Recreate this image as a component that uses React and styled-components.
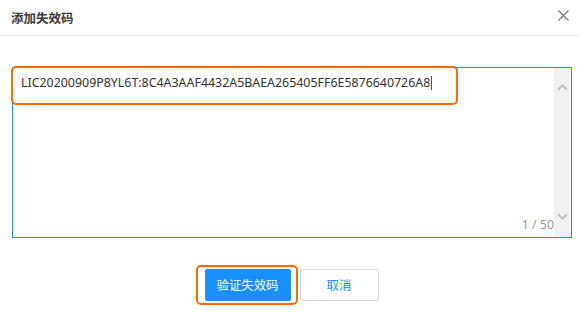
import styled, { createGlobalStyle } from "styled-components";

const GlobalStyle = createGlobalStyle`
  html, body {
    margin: 0;
    padding: 0;
    background: #fff;
    font-family: "Noto Sans", "Noto Sans CJK SC", sans-serif;
  }
`;

const Dialog = styled.div`
  width: 580px;
  height: 312px;
  background: #fff;
  display: flex;
  flex-direction: column;
`;

const Header = styled.div`
  height: 35px;
  border-bottom: 1px solid #e8e8e8;
  display: flex;
  align-items: center;
  justify-content: space-between;
  padding: 0 10px 0 11px;
`;

const Title = styled.div`
  font-family: "Noto Sans CJK SC", sans-serif;
  font-size: 12.5px;
  font-weight: 700;
  color: #3a3a3a;
`;

const Close = styled.button`
  border: 0;
  background: none;
  padding: 0;
  width: 14px;
  height: 14px;
  display: flex;
  align-items: center;
  justify-content: center;
  color: #777;
  margin-top: -4px;
`;

const Body = styled.div`
  padding: 31px 8px 0 12px;
`;

const Field = styled.div`
  position: relative;
  height: 171px;
  box-sizing: border-box;
  border: 1px solid #1890ff;
  display: flex;
`;

const Content = styled.div`
  flex: 1;
  display: flex;
  flex-direction: column;
  padding: 6px 0 0 8px;
`;

const Value = styled.div`
  flex: 1;
  font-size: 12.4px;
  line-height: 18px;
  color: #333;
`;

const Caret = styled.span`
  display: inline-block;
  width: 1px;
  height: 14px;
  background: #555;
  vertical-align: -3px;
  margin-left: 1px;
`;

const Count = styled.div`
  align-self: flex-end;
  font-size: 12.4px;
  color: #999;
  padding: 0 0 4px 0;
`;

const Scrollbar = styled.div`
  width: 17px;
  background: #f1f1f1;
  display: flex;
  flex-direction: column;
  justify-content: space-between;
  align-items: center;
  padding: 16px 0 17px;
`;

const Mark = styled.div`
  position: absolute;
  left: ${(p) => p.$left}px;
  top: ${(p) => p.$top}px;
  width: ${(p) => p.$width}px;
  height: ${(p) => p.$height}px;
  border: 2px solid #ff6a00;
  border-radius: 5px;
  box-sizing: border-box;
  pointer-events: none;
`;

const Footer = styled.div`
  margin-top: 31px;
  display: flex;
  justify-content: center;
  gap: 9px;
  padding-left: 3px;
`;

const Button = styled.button`
  position: relative;
  height: 32px;
  width: ${(p) => p.$width}px;
  box-sizing: border-box;
  border-radius: 2px;
  font-family: "Noto Sans CJK SC", sans-serif;
  font-size: 12.4px;
  cursor: pointer;
  border: 1px solid ${(p) => (p.$primary ? "#1890ff" : "#d9d9d9")};
  background: ${(p) => (p.$primary ? "#1890ff" : "#fff")};
  color: ${(p) => (p.$primary ? "#fff" : "#1890ff")};
`;

const Chevron = ({ up }) => (
  <svg width="11" height="7" viewBox="0 0 11 7">
    <path
      d={up ? "M1 6 L5.5 1.5 L10 6" : "M1 1 L5.5 5.5 L10 1"}
      fill="none"
      stroke="#c1c1c1"
      strokeWidth="2"
    />
  </svg>
);

export default function App() {
  return (
    <Dialog>
      <GlobalStyle />
      <Header>
        <Title>添加失效码</Title>
        <Close>
          <svg width="11" height="11" viewBox="0 0 11 11">
            <path d="M0.5 0.5 L10.5 10.5 M10.5 0.5 L0.5 10.5" stroke="#777" strokeWidth="1.2" />
          </svg>
        </Close>
      </Header>
      <Body>
        <Field>
          <Content>
            <Value>
              LIC20200909P8YL6T:8C4A3AAF4432A5BAEA265405FF6E5876640726A8
              <Caret />
            </Value>
            <Count>1 / 50</Count>
          </Content>
          <Scrollbar>
            <Chevron up />
            <Chevron />
          </Scrollbar>
          <Mark $left={-2} $top={-2} $width={447} $height={39} />
        </Field>
      </Body>
      <Footer>
        <Button $primary $width={86}>
          验证失效码
          <Mark $left={-10} $top={-5} $width={102} $height={40} />
        </Button>
        <Button $width={79}>取消</Button>
      </Footer>
    </Dialog>
  );
}
